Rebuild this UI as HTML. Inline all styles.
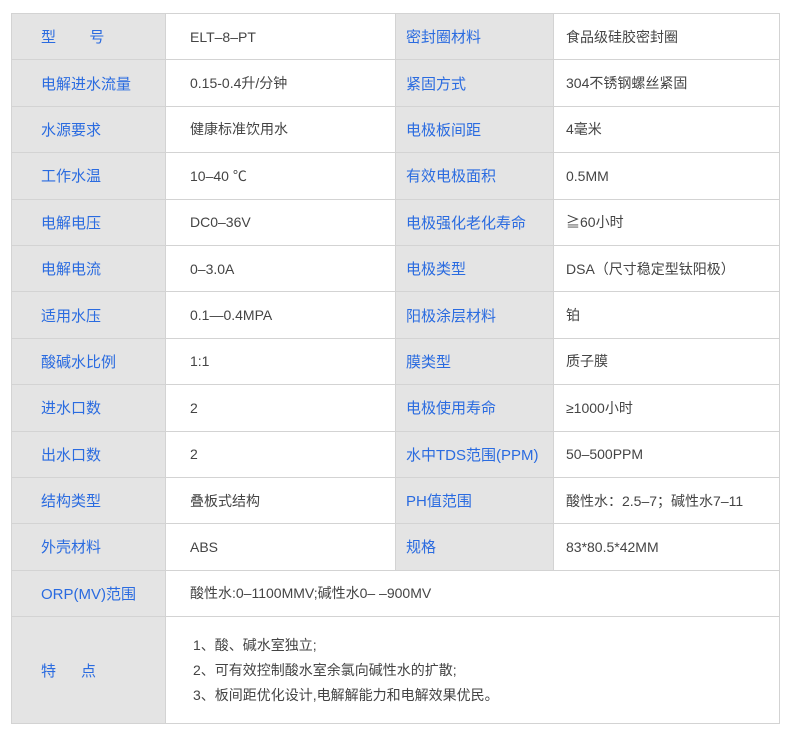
<!DOCTYPE html>
<html><head><meta charset="utf-8"><style>
body{margin:0;background:#fff;width:790px;height:747px;overflow:hidden;font-family:"Liberation Sans","Noto Sans CJK SC",sans-serif}
table{position:absolute;left:11px;top:13px;border-collapse:collapse;table-layout:fixed;width:768px}
td{border:1px solid #d3d3d3;height:46.4px;padding:0;font-size:14px;color:#444;box-sizing:border-box}
td.l{background:#e4e4e4;color:#2a6be0;font-size:15px;padding-left:29px}
td.v{padding-left:24px}
td.v2{padding-left:12px}
td.l2{padding-left:10px}
.f td{height:107px}
.f p{margin:0;line-height:25px}
</style></head><body>
<table>
<colgroup><col style="width:154px"><col style="width:230px"><col style="width:158px"><col style="width:226px"></colgroup>
<tr><td class="l">型&nbsp;&nbsp;&nbsp;&nbsp;&nbsp;&nbsp;&nbsp;&nbsp;号</td><td class="v">ELT–8–PT</td><td class="l l2">密封圈材料</td><td class="v2">食品级硅胶密封圈</td></tr>
<tr><td class="l">电解进水流量</td><td class="v">0.15-0.4升/分钟</td><td class="l l2">紧固方式</td><td class="v2">304不锈钢螺丝紧固</td></tr>
<tr><td class="l">水源要求</td><td class="v">健康标准饮用水</td><td class="l l2">电极板间距</td><td class="v2">4毫米</td></tr>
<tr><td class="l">工作水温</td><td class="v">10–40 ℃</td><td class="l l2">有效电极面积</td><td class="v2">0.5MM</td></tr>
<tr><td class="l">电解电压</td><td class="v">DC0–36V</td><td class="l l2">电极强化老化寿命</td><td class="v2">≧60小时</td></tr>
<tr><td class="l">电解电流</td><td class="v">0–3.0A</td><td class="l l2">电极类型</td><td class="v2">DSA（尺寸稳定型钛阳极）</td></tr>
<tr><td class="l">适用水压</td><td class="v">0.1—0.4MPA</td><td class="l l2">阳极涂层材料</td><td class="v2">铂</td></tr>
<tr><td class="l">酸碱水比例</td><td class="v">1:1</td><td class="l l2">膜类型</td><td class="v2">质子膜</td></tr>
<tr><td class="l">进水口数</td><td class="v">2</td><td class="l l2">电极使用寿命</td><td class="v2">≥1000小时</td></tr>
<tr><td class="l">出水口数</td><td class="v">2</td><td class="l l2">水中TDS范围(PPM)</td><td class="v2">50–500PPM</td></tr>
<tr><td class="l">结构类型</td><td class="v">叠板式结构</td><td class="l l2">PH值范围</td><td class="v2">酸性水：2.5–7；碱性水7–11</td></tr>
<tr><td class="l">外壳材料</td><td class="v">ABS</td><td class="l l2">规格</td><td class="v2">83*80.5*42MM</td></tr>
<tr><td class="l">ORP(MV)范围</td><td class="v" colspan="3">酸性水:0–1100MMV;碱性水0– –900MV</td></tr>
<tr class="f"><td class="l">特&nbsp;&nbsp;&nbsp;&nbsp;&nbsp;&nbsp;点</td><td class="v" colspan="3" style="padding-left:27px"><p>1、酸、碱水室独立;</p><p>2、可有效控制酸水室余氯向碱性水的扩散;</p><p>3、板间距优化设计,电解解能力和电解效果优民。</p></td></tr>
</table>
</body></html>
